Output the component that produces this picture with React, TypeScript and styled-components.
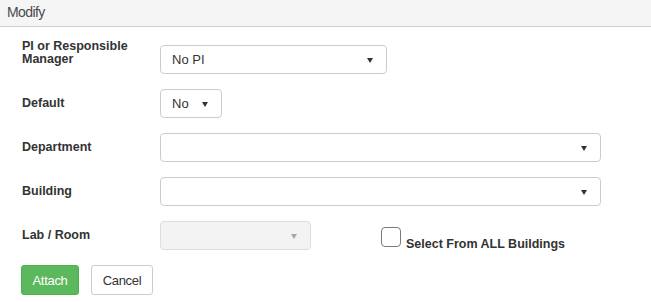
import React from 'react'
import styled, { createGlobalStyle } from 'styled-components'

const GlobalStyle = createGlobalStyle`
  html, body {
    margin: 0;
    padding: 0;
    background: #fff;
  }
  body {
    font-family: "Liberation Sans", Arial, sans-serif;
    color: #333;
  }
`

const Panel = styled.div`
  width: 651px;
  height: 302px;
  overflow: hidden;
`
const PanelHeader = styled.div`
  height: 26px;
  background: #f5f5f5;
  border-bottom: 1px solid #d0d0d0;
  padding-left: 7px;
  font-size: 14px;
  letter-spacing: -0.6px;
  line-height: 25px;
  color: #4a4a4a;
`
const Form = styled.form`
  display: flex;
  flex-direction: column;
  gap: 15px;
  padding: 11px 0 0 22px;
`
const Row = styled.div`
  display: flex;
  align-items: flex-start;
`
const Label = styled.label<{ $pt?: number }>`
  width: 138px;
  flex-shrink: 0;
  padding-top: ${p => p.$pt ?? 8}px;
  font-size: 12.5px;
  font-weight: bold;
  line-height: 13px;
  color: #333;
`
const SelectBox = styled.div<{ $width: number; $offset?: number; $disabled?: boolean }>`
  box-sizing: border-box;
  width: ${p => p.$width}px;
  height: 29px;
  margin-top: ${p => p.$offset ?? 0}px;
  display: flex;
  align-items: center;
  justify-content: space-between;
  padding: 0 13px 0 11px;
  border: 1px solid ${p => (p.$disabled ? '#ddd' : '#ccc')};
  border-radius: 4px;
  background: ${p => (p.$disabled ? '#f3f3f3' : '#fff')};
  font-size: 13px;
  color: #333;
`
const Arrow = styled.span<{ $muted?: boolean }>`
  width: 0;
  height: 0;
  border-left: 3.5px solid transparent;
  border-right: 3.5px solid transparent;
  border-top: 5px solid ${p => (p.$muted ? '#a8a8a8' : '#333')};
  margin-top: 1px;
`
const CheckWrap = styled.label`
  display: flex;
  align-items: flex-end;
  margin-left: 70px;
  margin-top: 6px;
  font-size: 12.5px;
  font-weight: bold;
  color: #333;
`
const CheckBox = styled.span`
  box-sizing: border-box;
  width: 20px;
  height: 20px;
  border: 1.5px solid #7a7a7a;
  border-radius: 4px;
  background: #fff;
  margin-right: 5px;
`
const CheckText = styled.span`
  line-height: 13px;
  margin-bottom: -4px;
`
const Buttons = styled.div`
  display: flex;
  gap: 12px;
  margin-left: -1px;
`
const Button = styled.button<{ $primary?: boolean }>`
  box-sizing: border-box;
  height: 30px;
  width: ${p => (p.$primary ? 58 : 62)}px;
  padding: 0;
  border-radius: 3px;
  border: 1px solid ${p => (p.$primary ? '#4cae4c' : '#ccc')};
  background: ${p => (p.$primary ? '#5cb85c' : '#fff')};
  color: ${p => (p.$primary ? '#fff' : '#333')};
  font-family: inherit;
  font-size: 13px;
  letter-spacing: -0.3px;
`

export default function App() {
  return (
    <>
      <GlobalStyle />
      <Panel>
        <PanelHeader>Modify</PanelHeader>
        <Form onSubmit={e => e.preventDefault()}>
          <Row>
            <Label $pt={2}>PI or Responsible<br />Manager</Label>
            <SelectBox $width={227} $offset={7}>
              <span>No PI</span>
              <Arrow />
            </SelectBox>
          </Row>
          <Row>
            <Label>Default</Label>
            <SelectBox $width={62}>
              <span>No</span>
              <Arrow />
            </SelectBox>
          </Row>
          <Row>
            <Label>Department</Label>
            <SelectBox $width={441}>
              <span />
              <Arrow />
            </SelectBox>
          </Row>
          <Row>
            <Label>Building</Label>
            <SelectBox $width={441}>
              <span />
              <Arrow />
            </SelectBox>
          </Row>
          <Row>
            <Label>Lab / Room</Label>
            <SelectBox $width={151} $disabled>
              <span />
              <Arrow $muted />
            </SelectBox>
            <CheckWrap>
              <CheckBox />
              <CheckText>Select From ALL Buildings</CheckText>
            </CheckWrap>
          </Row>
          <Buttons>
            <Button $primary type="submit">Attach</Button>
            <Button type="button">Cancel</Button>
          </Buttons>
        </Form>
      </Panel>
    </>
  )
}
